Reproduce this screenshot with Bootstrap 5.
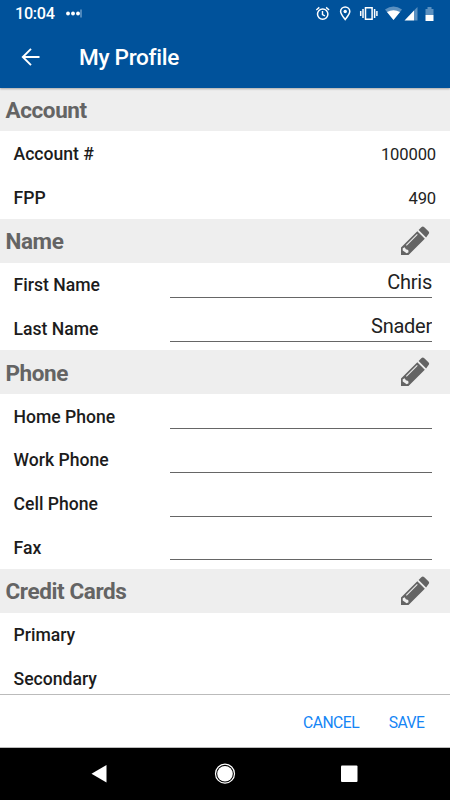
<!DOCTYPE html>
<html lang="en">
<head>
<meta charset="utf-8">
<meta name="viewport" content="width=device-width, initial-scale=1">
<title>My Profile</title>
<link href="https://cdn.jsdelivr.net/npm/bootstrap@5.3.0/dist/css/bootstrap.min.css" rel="stylesheet">
<style>
body{font-family:Roboto,"Liberation Sans",sans-serif;color:#1c1c1c;line-height:1}
.screen{width:450px;height:800px}
.top-area{background:#00529b;height:87.5px;box-shadow:0 1px 2px rgba(0,0,0,.3);z-index:1}
.status-bar{height:28px;padding:1px 15px 0;font-size:16.2px;font-weight:500;letter-spacing:-.3px}
.status-bar svg{margin-top:-1px}
.dots{margin-left:9px}
.app-bar{height:59.5px;padding-left:21px}
.back-arrow{margin-top:-1px}
.app-title{font-size:22.6px;font-weight:500;letter-spacing:-.3px;margin-left:38px;padding-top:2px}
.section-head{height:43.75px;background:#eee;color:#646464;padding:2px 20px 0 5.5px;font-size:22.5px;font-weight:700;letter-spacing:-.4px}
.section-head svg{margin-top:-2px}
.field-row{height:43.75px;padding:2px 14px 0 13.5px;font-size:17.6px}
.field-label{font-weight:500;width:156.5px;padding-top:1.8px}
.field-value{font-size:16.6px;letter-spacing:-.15px;padding-top:2px;font-weight:400;color:#222}
.line-input{width:262px;height:29px;margin:0 4px 4px 0;border:0;border-bottom:1px solid #666;padding:0 0 1px;text-align:right;font-size:20px;letter-spacing:-.25px;font-weight:400;background:none;color:#222;outline:0}
.actions{height:54px;border-top:1px solid #bbb;border-bottom:1px solid #bbb;padding:4px 25.5px 0;gap:29.5px}
.actions .btn{color:#1585f5;font-size:15.7px;line-height:1;font-weight:400;letter-spacing:-.5px}
.nav-keys{height:52px}
</style>
<script src="https://cdn.jsdelivr.net/npm/bootstrap@5.3.0/dist/js/bootstrap.bundle.min.js"></script>
</head>
<body class="m-0 bg-white">
<svg class="d-none">
<symbol id="pencil" viewBox="0 0 30 30">
<path fill="#646464" d="M1 21.5 17.300 5.200 24.800 12.700 8.500 29H1ZM18.600 3.900 21.300 1.200Q22.800-.2 24.300 1.200L28.400 5.300Q29.900 6.800 28.400 8.300L26.100 11.400Z"/>
<path fill="none" stroke="#eee" stroke-width="1.100" d="M6.300 19.400 17.300 8.400"/>
<path fill="#eee" d="M2.700 22.300 4.700 21.200 5.900 23.300 8.200 24 8.600 26.300 6.700 27.300 2.700 24.500Z"/>
</symbol>
</svg>
<div class="screen d-flex flex-column overflow-hidden">
<header class="top-area position-relative text-white flex-shrink-0">
<div class="status-bar d-flex align-items-center justify-content-between">
<div class="d-flex align-items-center"><span>10:04</span>
<svg width="18" height="10" class="dots"><g fill="#fff"><circle cx="4" cy="4.500" r="1.900"/><circle cx="9" cy="4.500" r="1.900"/><circle cx="14" cy="4.500" r="1.900"/></g><path d="M17 .5v8" stroke="#9bbcdc"/></svg></div>
<svg width="120" height="20" viewBox="315 3.500 120 20" fill="none" stroke="#fff">
<circle cx="322.700" cy="13.600" r="5.200" stroke-width="1.500"/><path d="M322.500 10.500v3.500l2.500 1.500M316.300 9.500l3-2.600M329.100 9.500l-3-2.600" stroke-width="1.400"/>
<path d="M345.200 19C342.500 15.500 340.600 13.300 340.600 11a4.600 4.600 0 0 1 9.200 0C349.800 13.300 347.900 15.500 345.200 19Z" stroke-width="1.500"/><circle cx="345.200" cy="11" r="1.700" fill="#fff" stroke="none"/>
<path d="M365.500 7.200h6.600v11.600h-6.600ZM363 8.500v9M374.600 8.500v9M360.700 10.500v5M376.900 10.500v5" stroke-width="1.500"/>
<g stroke="none"><path fill="#5b90c0" d="M385 9Q393.500 3 402 9L393.500 19.500Z"/><path fill="#fff" d="M387 11.500Q393.500 8 400 11.500L393.500 19.500Z"/>
<path fill="#fff" d="M404.500 20 414 10V20Z"/><path fill="#5b90c0" d="M414 10 417.500 6.500V20H414Z"/>
<path fill="#5b90c0" d="M425.500 8.500h2V6.500h4v2h2V14.500h-8Z"/><path fill="#fff" d="M425.500 14.500h8v6h-8Z"/></g>
</svg>
</div>
<div class="app-bar d-flex align-items-center">
<svg class="back-arrow" width="20" height="20" fill="none" stroke="#fff" stroke-width="1.900"><path d="M18.500 10H2M10 1.800 1.800 10l8.200 8.200"/></svg>
<div class="app-title">My Profile</div>
</div>
</header>
<main class="flex-grow-1 overflow-hidden">
<div class="section-head d-flex align-items-center">Account</div>
<div class="field-row d-flex align-items-center justify-content-between"><span class="field-label">Account #</span><span class="field-value">100000</span></div>
<div class="field-row d-flex align-items-center justify-content-between"><span class="field-label">FPP</span><span class="field-value">490</span></div>
<div class="section-head d-flex align-items-center justify-content-between">Name<svg width="30" height="30"><use href="#pencil"/></svg></div>
<div class="field-row d-flex align-items-center"><label class="field-label" for="first">First Name</label><input id="first" class="line-input" value="Chris"></div>
<div class="field-row d-flex align-items-center"><label class="field-label" for="last">Last Name</label><input id="last" class="line-input" value="Snader"></div>
<div class="section-head d-flex align-items-center justify-content-between">Phone<svg width="30" height="30"><use href="#pencil"/></svg></div>
<div class="field-row d-flex align-items-center"><label class="field-label" for="home">Home Phone</label><input id="home" class="line-input"></div>
<div class="field-row d-flex align-items-center"><label class="field-label" for="work">Work Phone</label><input id="work" class="line-input"></div>
<div class="field-row d-flex align-items-center"><label class="field-label" for="cell">Cell Phone</label><input id="cell" class="line-input"></div>
<div class="field-row d-flex align-items-center"><label class="field-label" for="fax">Fax</label><input id="fax" class="line-input"></div>
<div class="section-head d-flex align-items-center justify-content-between">Credit Cards<svg width="30" height="30"><use href="#pencil"/></svg></div>
<div class="field-row d-flex align-items-center"><span class="field-label">Primary</span></div>
<div class="field-row d-flex align-items-center"><span class="field-label">Secondary</span></div>
</main>
<div class="actions d-flex align-items-center justify-content-end bg-white flex-shrink-0">
<button class="btn border-0 p-0">CANCEL</button><button class="btn border-0 p-0">SAVE</button>
</div>
<nav class="nav-keys bg-black flex-shrink-0">
<svg width="450" height="52"><path d="M91.500 25.800 106.500 17v17.600Z" fill="#fff"/><circle cx="225" cy="25.700" r="9.500" fill="none" stroke="#fff" stroke-width="1.200"/><circle cx="225" cy="25.700" r="7.800" fill="#fff"/><rect x="341" y="17.500" width="16.500" height="16.500" rx="1" fill="#fff"/></svg>
</nav>
</div>
</body>
</html>
